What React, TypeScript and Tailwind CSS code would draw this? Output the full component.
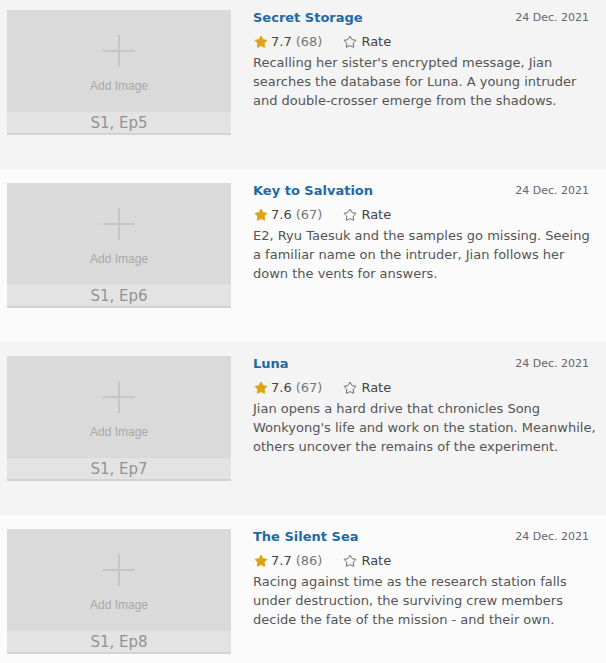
import { Star } from 'lucide-react';

type Episode = {
  title: string;
  date: string;
  rating: string;
  votes: number;
  ep: string;
  plot: string;
};

const EPISODES: Episode[] = [
  {
    title: 'Secret Storage',
    date: '24 Dec. 2021',
    rating: '7.7',
    votes: 68,
    ep: 'S1, Ep5',
    plot: "Recalling her sister's encrypted message, Jian searches the database for Luna. A young intruder and double-crosser emerge from the shadows.",
  },
  {
    title: 'Key to Salvation',
    date: '24 Dec. 2021',
    rating: '7.6',
    votes: 67,
    ep: 'S1, Ep6',
    plot: 'E2, Ryu Taesuk and the samples go missing. Seeing a familiar name on the intruder, Jian follows her down the vents for answers.',
  },
  {
    title: 'Luna',
    date: '24 Dec. 2021',
    rating: '7.6',
    votes: 67,
    ep: 'S1, Ep7',
    plot: "Jian opens a hard drive that chronicles Song Wonkyong's life and work on the station. Meanwhile, others uncover the remains of the experiment.",
  },
  {
    title: 'The Silent Sea',
    date: '24 Dec. 2021',
    rating: '7.7',
    votes: 86,
    ep: 'S1, Ep8',
    plot: 'Racing against time as the research station falls under destruction, the surviving crew members decide the fate of the mission - and their own.',
  },
];

function AddImage({ ep }: { ep: string }) {
  return (
    <div className="w-[224px] shrink-0 border-b-2 border-[#d3d3d3]">
      <div className="flex h-[102px] flex-col items-center bg-[#dadada] pt-[25px]">
        <div className="relative h-[32px] w-[32px]">
          <span className="absolute left-[15px] top-0 h-full w-[2px] bg-[#c6c6c6]" />
          <span className="absolute left-0 top-[15px] h-[2px] w-full bg-[#c6c6c6]" />
        </div>
        <span className="mt-[12px] font-['Liberation_Sans',Arial,sans-serif] text-[12px] leading-[14px] text-[#a9a9a9]">
          Add Image
        </span>
      </div>
      <div className="h-[21px] bg-[#e3e3e3] text-center text-[15px] leading-[22px] text-[#939393]">
        {ep}
      </div>
    </div>
  );
}

function EpisodeRow({ e, shade }: { e: Episode; shade: boolean }) {
  return (
    <div className={`flex h-[173px] items-start pl-[7px] pr-[10px] pt-[14px] ${shade ? 'bg-[#f4f4f4]' : 'bg-[#fbfbfb]'}`}>
      <AddImage ep={e.ep} />
      <div className="ml-[22px] min-w-0 flex-1">
        <div className="flex items-start justify-between">
          <a className="text-[13px] font-bold leading-[16px] text-[#1f6aa6]">{e.title}</a>
          <span className="mr-[7px] pt-[1px] text-[11px] leading-[14px] text-[#666]">{e.date}</span>
        </div>
        <div className="mt-[6px] flex h-[20px] items-center text-[13px] text-[#444]">
          <Star size={14} className="ml-[1px] fill-[#dba315] text-[#dba315]" strokeWidth={1.5} />
          <span className="ml-[3px]">{e.rating}</span>
          <span className="ml-[4px] text-[#777]">({e.votes})</span>
          <span className="ml-[21px] flex items-center gap-[4px]">
            <Star size={14} className="text-[#555]" strokeWidth={1.5} />
            Rate
          </span>
        </div>
        <p className="mt-[1px] text-[13px] leading-[19px] text-[#555]">{e.plot}</p>
      </div>
    </div>
  );
}

export default function App() {
  return (
    <div className="h-[663px] w-[606px] overflow-hidden bg-[#fbfbfb] font-['DejaVu_Sans',Verdana,sans-serif]">
      <div className="-mt-[4px]">
        {EPISODES.map((e, i) => (
          <EpisodeRow key={e.ep} e={e} shade={i % 2 === 0} />
        ))}
      </div>
    </div>
  );
}
